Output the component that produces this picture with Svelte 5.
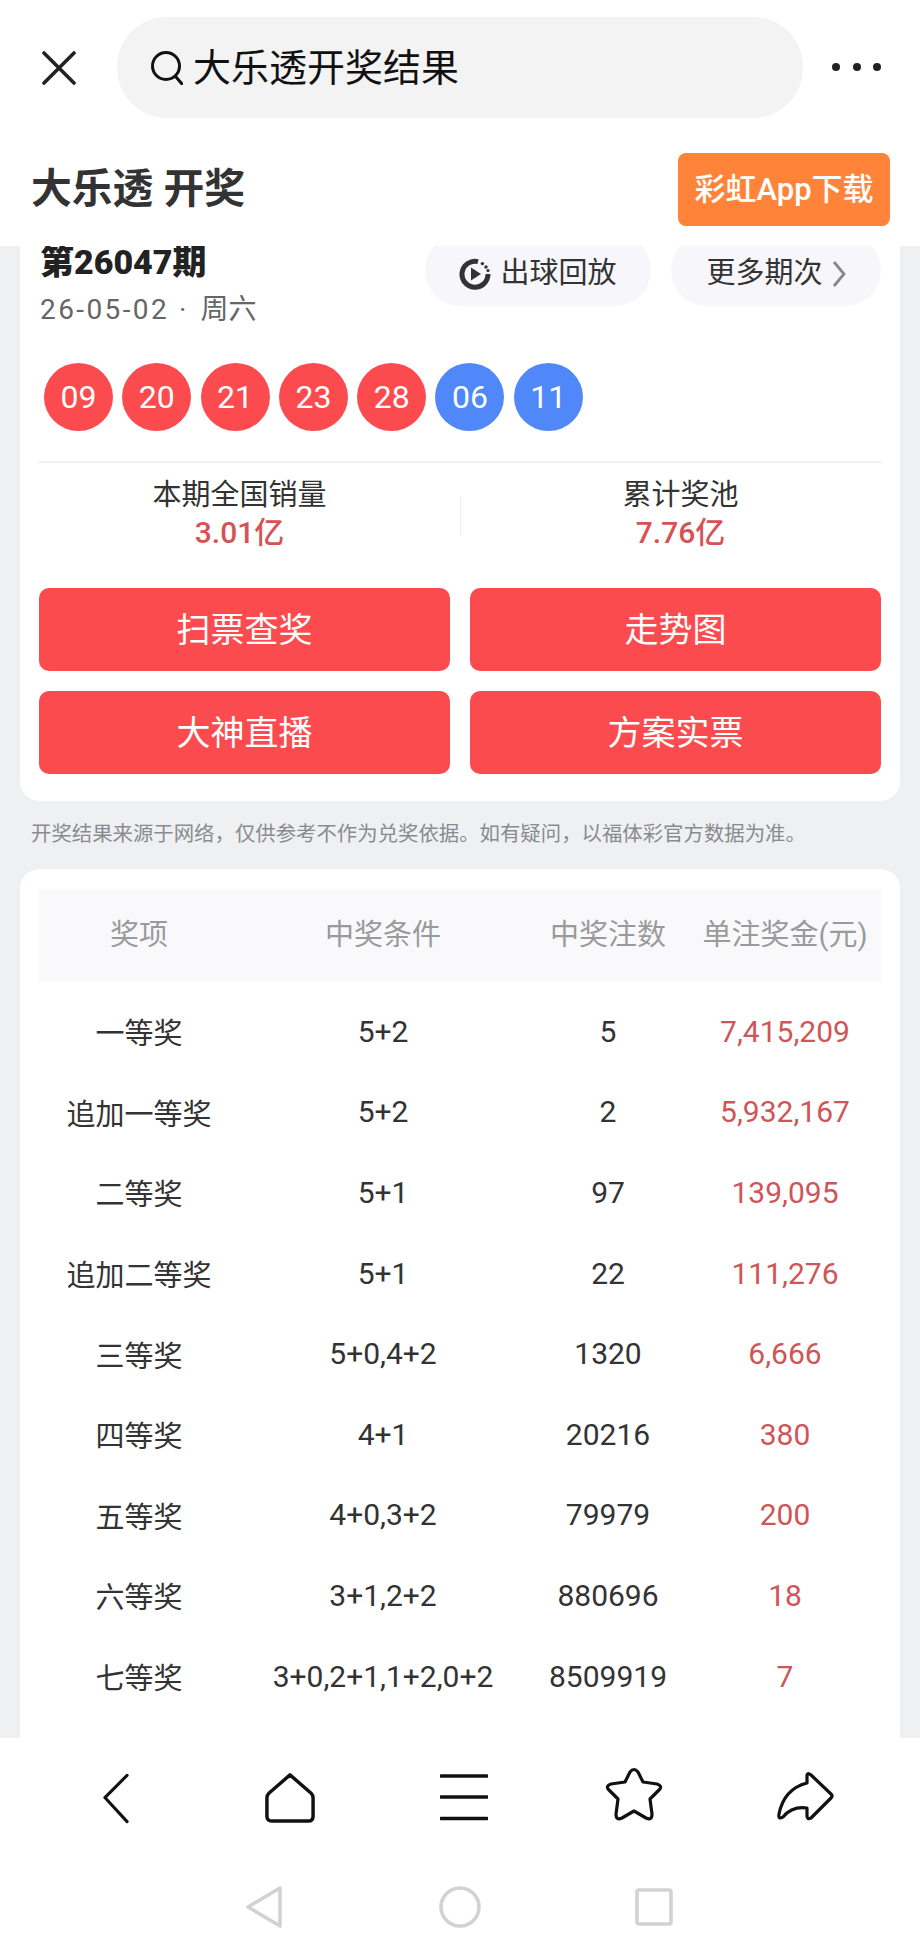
<script>
  const reds = ['09', '20', '21', '23', '28'];
  const blues = ['06', '11'];
  const actions = ['扫票查奖', '走势图', '大神直播', '方案实票'];
  const rows = [
    ['一等奖', '5+2', '5', '7,415,209'],
    ['追加一等奖', '5+2', '2', '5,932,167'],
    ['二等奖', '5+1', '97', '139,095'],
    ['追加二等奖', '5+1', '22', '111,276'],
    ['三等奖', '5+0,4+2', '1320', '6,666'],
    ['四等奖', '4+1', '20216', '380'],
    ['五等奖', '4+0,3+2', '79979', '200'],
    ['六等奖', '3+1,2+2', '880696', '18'],
    ['七等奖', '3+0,2+1,1+2,0+2', '8509919', '7']
  ];
</script>

<div class="page">
  <header class="topbar">
    <svg class="close" viewBox="0 0 34 34"><path d="M2 2 L32 32 M32 2 L2 32" /></svg>
    <div class="search">
      <svg class="lens" viewBox="0 0 32 34"><circle cx="15" cy="15" r="13.5" /><path d="M25 26 L31 33" /></svg>
      <span>大乐透开奖结果</span>
    </div>
    <div class="dots"><i></i><i></i><i></i></div>
  </header>

  <div class="titlebar">
    <h1>大乐透 开奖</h1>
    <div class="download">彩虹App下载</div>
  </div>

  <main class="scroller">
    <section class="card draw">
      <div class="draw-head">
        <div class="issue">
          <div class="no">第26047期</div>
          <div class="date"><span class="digits">26-05-02</span><span class="sep">·</span>周六</div>
        </div>
        <div class="pill replay">
          <svg class="play" viewBox="0 0 32 32">
            <path class="arc" d="M19 3.6 A13 13 0 1 0 29 16" />
            <circle cx="23.4" cy="5.6" r="1.7" /><circle cx="27" cy="9" r="1.7" /><circle cx="29" cy="12.6" r="1.6" />
            <path d="M12 9.5 L22 16 L12 22.5 Z" />
          </svg>
          <span>出球回放</span>
        </div>
        <div class="pill more">
          <span>更多期次</span>
          <svg class="chev" viewBox="0 0 14 28"><path d="M2 2 L12 14 L2 26" /></svg>
        </div>
      </div>

      <div class="balls">
        {#each reds as n}<span class="ball red">{n}</span>{/each}
        {#each blues as n}<span class="ball blue">{n}</span>{/each}
      </div>

      <div class="stats">
        <div class="stat"><div class="label">本期全国销量</div><div class="value">3.01亿</div></div>
        <div class="stat"><div class="label">累计奖池</div><div class="value">7.76亿</div></div>
      </div>

      <div class="actions">
        {#each actions as a}<div class="action">{a}</div>{/each}
      </div>
    </section>

    <p class="note">开奖结果来源于网络，仅供参考不作为兑奖依据。如有疑问，以福体彩官方数据为准。</p>

    <section class="card prizes">
      <div class="row head">
        <div>奖项</div><div>中奖条件</div><div>中奖注数</div><div>单注奖金(元)</div>
      </div>
      {#each rows as r}
        <div class="row">
          <div>{r[0]}</div><div class="num">{r[1]}</div><div class="num">{r[2]}</div><div class="num money">{r[3]}</div>
        </div>
      {/each}
    </section>
  </main>

  <nav class="toolbar">
    <svg class="t-back" viewBox="0 0 28 52"><path d="M26 2 L3 25 L26 50" /></svg>
    <svg class="t-home" viewBox="0 0 52 52"><path d="M26 2 L48 21 Q50 23 50 26 L50 45 Q50 50 45 50 L7 50 Q2 50 2 45 L2 26 Q2 23 4 21 Z" /></svg>
    <svg class="t-menu" viewBox="0 0 48 48"><path d="M1 3 H47 M1 24 H47 M1 45.5 H47" /></svg>
    <svg class="t-star" viewBox="-2 -2 58 56"><path d="M23 4 Q27 -1 31 4 L36 14 L50 16 Q56 18 52 22 L43 31 L45 46 Q45 53 39 50 L27 43 L15 50 Q9 53 9 46 L11 31 L2 22 Q-2 18 4 16 L18 14 Z" /></svg>
    <svg class="t-share" viewBox="-2 -2 59 51"><path d="M29 3 Q29 -1 33 2 L53 21 Q55 23 53 25 L33 45 Q29 47 29 43 L29 35 Q14 33 5 44 Q0 47 1 41 Q6 16 29 10 Z" /></svg>
  </nav>

  <div class="sysnav">
    <svg class="s-back" viewBox="0 0 38 44"><path d="M35 3 L3 22 L35 41 Z" /></svg>
    <svg class="s-home" viewBox="0 0 42 42"><circle cx="21" cy="21" r="19" /></svg>
    <svg class="s-square" viewBox="0 0 38 38"><rect x="2" y="2" width="34" height="34" rx="2" /></svg>
  </div>
</div>

<style>
  :global(body) { margin: 0; background: #fff; }
  .page {
    width: 920px;
    height: 1956px;
    display: flex;
    flex-direction: column;
    overflow: hidden;
    background: #fff;
    color: #333;
    font-family: Roboto, "Noto Sans CJK SC", sans-serif;
  }
  svg { display: block; flex: none; fill: none; }

  .topbar { height: 136px; flex: none; display: flex; align-items: flex-start; padding: 17px 0 0 42px; box-sizing: border-box; }
  .close { width: 34px; height: 34px; margin: 34px 41px 0 0; }
  .close path { stroke: #222; stroke-width: 3.6; stroke-linecap: round; }
  .search {
    width: 686px; height: 101px; border-radius: 50px; background: #f3f3f4;
    display: flex; align-items: center; padding-left: 34px; box-sizing: border-box;
    font-size: 38px; color: #111; line-height: 1;
  }
  .lens { width: 32px; height: 34px; margin-right: 10px; }
  .lens circle, .lens path { stroke: #111; stroke-width: 3; stroke-linecap: round; }
  .dots { display: flex; gap: 12.5px; margin: 46px 0 0 29px; }
  .dots i { width: 8px; height: 8px; border-radius: 50%; background: #222; }

  .titlebar { height: 110px; flex: none; display: flex; align-items: flex-start; justify-content: space-between; padding: 17px 30px 0 31px; box-sizing: border-box; }
  h1 { margin: 0; font-size: 40.8px; line-height: 1; font-weight: 700; color: #333; padding-top: 16px; }
  .download {
    width: 212px; height: 73px; border-radius: 8px; background: #ff843a; color: #fff;
    display: flex; align-items: center; justify-content: center;
    font-size: 31px; font-weight: 500; line-height: 1;
  }

  .scroller { flex: 1; min-height: 0; overflow: hidden; background: #eff0f2; padding: 0 20px; }
  .card { background: #fff; border-radius: 20px; box-sizing: border-box; }
  .draw { margin-top: -30px; height: 585px; padding: 18px 19px 0; }
  .draw-head { display: flex; align-items: flex-start; height: 129px; }
  .issue { margin-right: auto; padding: 12px 0 0 1px; }
  .no { font-size: 34px; line-height: 32px; font-weight: 900; color: #222; }
  .date { font-size: 28px; line-height: 42px; color: #666; margin-top: 11px; }
  .digits { letter-spacing: 2.4px; }
  .sep { margin: 0 14px 0 10px; }
  .pill {
    height: 72px; border-radius: 36px; background: #f7f7fb; box-sizing: border-box;
    display: flex; align-items: center; justify-content: center;
    font-size: 29px; color: #333; line-height: 1; padding-top: 7px;
  }
  .replay { width: 226px; gap: 9px; margin-right: 20px; }
  .more { width: 210px; gap: 9px; }
  .play { width: 32px; height: 32px; }
  .play .arc { stroke: #333; stroke-width: 5; fill: none; }
  .play circle, .play path:not(.arc) { fill: #333; }
  .chev { width: 14px; height: 28px; }
  .chev path { stroke: #888; stroke-width: 2.8; }

  .balls { display: flex; gap: 9.3px; padding-left: 5px; }
  .ball {
    width: 69px; height: 68px; border-radius: 50%; color: #fff;
    display: flex; align-items: center; justify-content: center; font-size: 32px; line-height: 1;
  }
  .red { background: #fb4b4e; }
  .blue { background: #5087f9; }

  .stats { display: grid; grid-template-columns: 1fr 1fr; margin-top: 30px; border-top: 2px solid #f1f1f3; height: 127px; box-sizing: border-box; }
  .stat { text-align: center; padding-top: 13px; position: relative; }
  .stat:first-child { padding-right: 20px; }
  .stat + .stat { padding-left: 20px; }
  .stat + .stat::before { content: ""; position: absolute; left: 0; top: 33px; height: 40px; width: 1px; background: #eeeeef; }
  .label { font-size: 29px; line-height: 38px; color: #333; }
  .value { font-size: 30px; line-height: 38px; font-weight: 500; color: #d65255; }

  .actions { display: grid; grid-template-columns: 411px 411px; gap: 20px; }
  .action {
    height: 83px; border-radius: 10px; background: #fb4b4e; color: #fff;
    display: flex; align-items: center; justify-content: center; font-size: 34px; line-height: 1;
  }

  .note { margin: 0; height: 68px; padding: 19px 0 0 11px; box-sizing: border-box; font-size: 20.4px; line-height: 28px; color: #888b90; white-space: nowrap; }

  .prizes { padding: 20px 19px 0; height: 1000px; }
  .row { display: grid; grid-template-columns: 200px 288px 162px 192px; height: 80.6px; align-items: center; text-align: center; font-size: 29px; color: #333; }
  .row:nth-child(2) { margin-top: 10px; }
  .num { font-size: 30px; }
  .head { height: 92px; background: #f9f9fb; color: #9a9a9c; font-size: 29px; padding-bottom: 6px; box-sizing: border-box; }
  .head div { white-space: nowrap; }
  .money { color: #cf5558; }

  .toolbar { height: 128px; flex: none; background: #fff; display: flex; align-items: flex-start; position: relative; padding-left: 102px; box-sizing: border-box; }
  .t-back { width: 27px; height: 51px; margin: 35px 136px 0 0; }
  .t-back path { stroke: #111; stroke-width: 3.2; stroke-linecap: round; stroke-linejoin: round; }
  .t-home { width: 50px; height: 50px; margin: 35px 125px 0 0; }
  .t-home path { stroke: #111; stroke-width: 3.6; stroke-linejoin: round; }
  .t-menu { width: 48px; height: 48px; margin: 35px 117px 0 0; }
  .t-menu path { stroke: #111; stroke-width: 3.6; stroke-linecap: round; }
  .t-star { width: 58px; height: 56px; margin: 28px 113px 0 0; }
  .t-star path { stroke: #111; stroke-width: 3.2; stroke-linejoin: round; }
  .t-share { width: 59px; height: 51px; margin: 33px 0 0 0; }
  .t-share path { stroke: #111; stroke-width: 3.2; stroke-linejoin: round; }

  .sysnav { height: 90px; flex: none; background: #fff; display: flex; align-items: flex-start; padding-left: 245px; box-sizing: border-box; }
  .s-back { width: 38px; height: 44px; margin: 19px 156px 0 0; }
  .s-home { width: 42px; height: 42px; margin: 20px 154px 0 0; }
  .s-square { width: 38px; height: 38px; margin: 22px 0 0 0; }
  .sysnav path, .sysnav circle, .sysnav rect { stroke: #d2d2d2; stroke-width: 3.6; stroke-linejoin: round; }
</style>
